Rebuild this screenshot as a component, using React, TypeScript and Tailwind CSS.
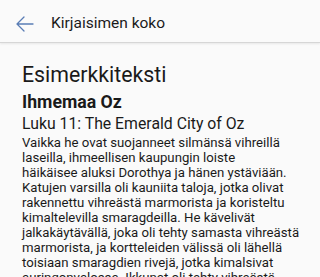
import React from "react";

const lines = [
  "Vaikka he ovat suojanneet silmänsä vihreillä",
  "laseilla, ihmeellisen kaupungin loiste",
  "häikäisee aluksi Dorothya ja hänen ystäviään.",
  "Katujen varsilla oli kauniita taloja, jotka olivat",
  "rakennettu vihreästä marmorista ja koristeltu",
  "kimaltelevilla smaragdeilla. He kävelivät",
  "jalkakäytävällä, joka oli tehty samasta vihreästä",
  "marmorista, ja kortteleiden välissä oli lähellä",
  "toisiaan smaragdien rivejä, jotka kimalsivat",
  "auringonvalossa. Ikkunat oli tehty vihreästä",
];

export default function App() {
  return (
    <div
      className="w-full h-[277px] overflow-hidden bg-[#fafafa] text-[#1a1a1a]"
      style={{ fontFamily: "Roboto, 'Noto Sans', sans-serif" }}
    >
      <div className="h-[43px] pt-[5px] flex items-center border-b border-[#d6d6d6] shadow-[0_1px_2px_rgba(0,0,0,0.08)]">
        <svg
          className="ml-[16px]"
          width="18"
          height="16"
          viewBox="0 0 18 16"
          fill="none"
          stroke="#5a7db5"
          strokeWidth="1.3"
          strokeLinecap="round"
          strokeLinejoin="round"
        >
          <path d="M17 8H1.5M8 1L1 8l7 7" />
        </svg>
        <span className="ml-[17px] text-[15.5px] leading-none">Kirjaisimen koko</span>
      </div>
      <div className="pl-[22px] whitespace-nowrap">
        <div className="mt-[20px] text-[21.3px] leading-[24px]">Esimerkkiteksti</div>
        <div className="mt-[4px] text-[17.7px] leading-[22px] font-bold">Ihmemaa Oz</div>
        <div className="mt-[1px] text-[15.8px] leading-[20px]">Luku 11: The Emerald City of Oz</div>
        <div className="mt-[1px] text-[13.2px] leading-[15px]">
          {lines.map((l) => (
            <div key={l}>{l}</div>
          ))}
        </div>
      </div>
    </div>
  );
}
